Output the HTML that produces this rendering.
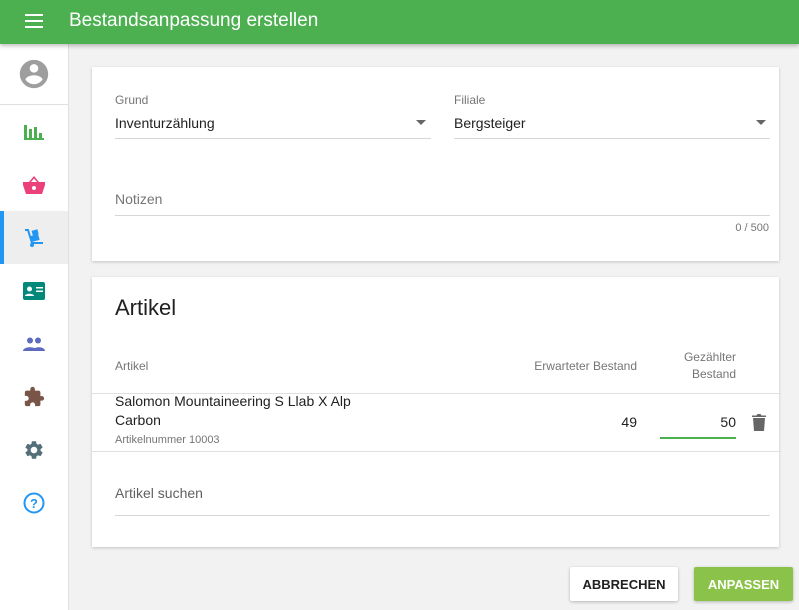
<!DOCTYPE html><html><head><meta charset="utf-8"><style>
*{box-sizing:border-box;margin:0;padding:0}
body{width:799px;height:610px;overflow:hidden;background:#f2f2f2;font-family:"Liberation Sans",sans-serif;position:relative;color:#212121}
.hdr{position:absolute;left:0;top:0;width:799px;height:44px;background:#4caf50;box-shadow:0 2px 4px rgba(0,0,0,.25);z-index:3}
.hdr .t{position:absolute;left:69px;top:10px;color:#fff;font-size:19px}
.side{position:absolute;left:0;top:44px;width:69px;height:566px;background:#fff;border-right:1px solid #e0e0e0}
.ic{position:absolute;left:0;width:68px;height:53px;display:flex;align-items:center;justify-content:center}
.card{position:absolute;left:92px;width:687px;background:#fff;box-shadow:0 1px 3px rgba(0,0,0,.2)}
.lbl{position:absolute;font-size:12px;color:#757575}
.val{position:absolute;font-size:14px;color:#212121}
.line{position:absolute;height:1px;background:#d6d6d6}
.arrow{position:absolute;width:0;height:0;border-left:5px solid transparent;border-right:5px solid transparent;border-top:5px solid #666}
.btn{position:absolute;top:567px;height:34px;font-size:13px;font-weight:bold;display:flex;align-items:center;justify-content:center;box-shadow:0 1px 3px rgba(0,0,0,.25);border-radius:2px}
</style></head><body>
<div class="hdr">
<svg style="position:absolute;left:25px;top:14px" width="18" height="14"><rect y="0" width="18" height="2" fill="#fff"/><rect y="6" width="18" height="2" fill="#fff"/><rect y="12" width="18" height="2" fill="#fff"/></svg>
<div class="t">Bestandsanpassung erstellen</div></div>
<div class="side">
<div style="position:absolute;left:0;top:60px;width:68px;height:1px;background:#e0e0e0"></div>
<svg style="position:absolute;left:17px;top:13px" width="34" height="34" viewBox="0 0 24 24"><path fill="#9e9e9e" d="M12 2C6.48 2 2 6.48 2 12s4.48 10 10 10 10-4.48 10-10S17.52 2 12 2zm0 3c1.66 0 3 1.34 3 3s-1.34 3-3 3-3-1.34-3-3 1.34-3 3-3zm0 14.2c-2.5 0-4.710-1.28-6-3.22.03-1.99 4-3.08 6-3.08 1.99 0 5.97 1.09 6 3.08-1.29 1.940-3.5 3.22-6 3.22z"/></svg>
<div class="ic" style="top:61px"><svg width="20" height="18"><g fill="#4caf50"><rect x="0" y="2" width="3" height="15"/><rect x="5" y="6" width="3" height="11"/><rect x="10" y="4" width="3" height="13"/><rect x="15" y="10" width="3" height="7"/><rect x="0" y="15" width="20" height="2"/></g></svg></div>
<div class="ic" style="top:114px"><svg width="22" height="20" viewBox="0 0 22 20"><path fill="#ec407a" d="M0 7h22v3l-3 9H3L0 10z M6 7l5-6 5 6h-2l-3-3.5L8 7z"/><circle cx="11" cy="13" r="2" fill="#fff"/></svg></div>
<div style="position:absolute;left:0;top:167px;width:68px;height:53px;background:#eee"></div>
<div style="position:absolute;left:0;top:167px;width:4px;height:53px;background:#2196f3"></div>
<div class="ic" style="top:167px"><svg width="22" height="22" viewBox="0 0 22 22"><path fill="none" stroke="#2196f3" stroke-width="2" d="M2 3h3l4 13h11"/><rect x="8" y="8" width="8" height="6" fill="#2196f3" transform="rotate(-15 12 11)"/><rect x="9" y="3" width="6" height="5" fill="#2196f3" transform="rotate(-15 12 5)"/><circle cx="9" cy="18" r="2" fill="#2196f3"/></svg></div>
<div class="ic" style="top:220px"><svg width="22" height="18"><rect width="22" height="18" rx="2" fill="#00897b"/><circle cx="6.5" cy="7" r="2.5" fill="#fff"/><path d="M2 14c0-3 9-3 9 0z" fill="#fff"/><rect x="13" y="5" width="7" height="1.5" fill="#fff"/><rect x="13" y="8.5" width="7" height="1.5" fill="#fff"/></svg></div>
<div class="ic" style="top:273px"><svg width="22" height="14"><circle cx="7" cy="3.5" r="3" fill="#5c6bc0"/><circle cx="15" cy="3.5" r="3" fill="#5c6bc0"/><path d="M0 14c0-5 14-5 14 0z M9 14c1-5 13-5 13 0z" fill="#5c6bc0"/></svg></div>
<div class="ic" style="top:326px"><svg width="22" height="22" viewBox="0 0 24 24"><path fill="#795548" d="M20.5 11H19V7c0-1.1-.9-2-2-2h-4V3.5C13 2.12 11.88 1 10.5 1S8 2.12 8 3.5V5H4c-1.1 0-1.99.9-1.99 2v3.8H3.5c1.49 0 2.7 1.21 2.7 2.7s-1.21 2.7-2.7 2.7H2V20c0 1.1.9 2 2 2h3.8v-1.5c0-1.49 1.21-2.7 2.7-2.7 1.49 0 2.7 1.21 2.7 2.7V22H17c1.1 0 2-.9 2-2v-4h1.5c1.38 0 2.5-1.12 2.5-2.5S21.88 11 20.5 11z"/></svg></div>
<div class="ic" style="top:379px"><svg width="22" height="22" viewBox="0 0 24 24"><path fill="#546e7a" d="M19.14 12.94c.04-.3.06-.61.06-.94 0-.32-.02-.64-.07-.94l2.030-1.58c.18-.14.23-.41.12-.61l-1.920-3.32c-.12-.22-.37-.29-.59-.22l-2.39.96c-.5-.38-1.030-.7-1.620-.94l-.36-2.54c-.04-.24-.24-.41-.48-.41h-3.84c-.24 0-.43.17-.47.41l-.36 2.54c-.59.24-1.13.57-1.62.94l-2.39-.96c-.22-.08-.47 0-.59.22L2.74 8.87c-.12.21-.08.47.12.61l2.03 1.58c-.05.3-.09.63-.09.94s.02.64.07.94l-2.03 1.58c-.18.14-.23.41-.12.61l1.92 3.32c.12.22.37.29.59.22l2.39-.96c.5.38 1.03.7 1.62.94l.36 2.54c.05.24.24.41.48.41h3.84c.24 0 .44-.17.47-.41l.36-2.54c.59-.24 1.13-.56 1.62-.94l2.39.96c.22.08.47 0 .59-.22l1.92-3.32c.12-.22.07-.47-.12-.61l-2.01-1.58zM12 15.6c-1.98 0-3.6-1.62-3.6-3.6s1.62-3.6 3.6-3.6 3.6 1.62 3.6 3.6-1.62 3.6-3.6 3.6z"/></svg></div>
<div class="ic" style="top:432px"><svg width="22" height="22" viewBox="0 0 22 22"><circle cx="11" cy="11" r="9.5" fill="none" stroke="#2196f3" stroke-width="2"/><text x="11" y="16" text-anchor="middle" font-family="Liberation Sans" font-weight="bold" font-size="13" fill="#2196f3">?</text></svg></div>
</div>

<div class="card" style="top:67px;height:194px">
<div class="lbl" style="left:23px;top:26px">Grund</div>
<div class="val" style="left:23px;top:48px">Inventurzählung</div>
<div class="arrow" style="left:324px;top:53px"></div>
<div class="line" style="left:23px;top:71px;width:316px"></div>
<div class="lbl" style="left:362px;top:26px">Filiale</div>
<div class="val" style="left:362px;top:48px">Bergsteiger</div>
<div class="arrow" style="left:664px;top:53px"></div>
<div class="line" style="left:362px;top:71px;width:316px"></div>
<div class="val" style="left:23px;top:124px;color:#757575">Notizen</div>
<div class="line" style="left:23px;top:148px;width:655px"></div>
<div class="lbl" style="right:10px;top:155px;font-size:11px">0 / 500</div>
</div>

<div class="card" style="top:277px;height:270px">
<div style="position:absolute;left:23px;top:18px;font-size:22px">Artikel</div>
<div class="lbl" style="left:23px;top:82px">Artikel</div>
<div class="lbl" style="right:142px;top:82px">Erwarteter Bestand</div>
<div class="lbl" style="right:43px;top:72px;text-align:right;line-height:17px">Gezählter<br>Bestand</div>
<div class="line" style="left:0;top:116px;width:687px;background:#e0e0e0"></div>
<div class="val" style="left:23px;top:115px;line-height:19px">Salomon Mountaineering S Llab X Alp<br>Carbon</div>
<div class="lbl" style="left:23px;top:157px;font-size:11px">Artikelnummer 10003</div>
<div class="val" style="right:142px;top:137px">49</div>
<div class="val" style="right:43px;top:137px">50</div>
<div style="position:absolute;left:568px;top:160px;width:76px;height:2px;background:#4caf50"></div>
<svg style="position:absolute;left:660px;top:137px" width="14" height="17" viewBox="0 0 14 17"><path fill="#666" d="M1 4h12l-1 13H2z M0 1.5h4.5L5.5 0h3l1 1.5H14V3H0z"/></svg>
<div class="line" style="left:0;top:174px;width:687px;background:#e0e0e0"></div>
<div class="val" style="left:23px;top:208px;color:#616161">Artikel suchen</div>
<div class="line" style="left:23px;top:238px;width:655px"></div>
</div>

<div class="btn" style="left:570px;width:108px;background:#fff;color:#212121">ABBRECHEN</div>
<div class="btn" style="left:694px;width:99px;background:#8bc34a;color:#fff">ANPASSEN</div>
</body></html>
